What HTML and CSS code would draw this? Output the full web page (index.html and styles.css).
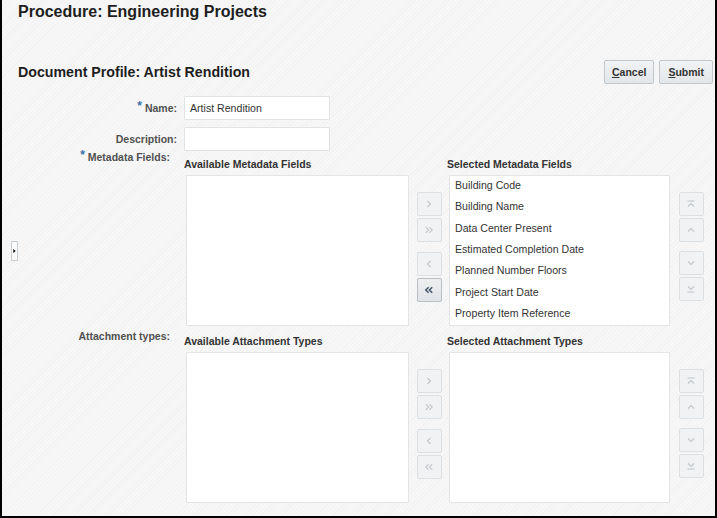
FILE: index.html
```html
<!DOCTYPE html>
<html lang="en">
<head>
<meta charset="utf-8">
<title>Document Profile</title>
<link rel="stylesheet" href="styles.css">
</head>
<body>
<div class="page">
  <h1 class="title">Procedure: Engineering Projects</h1>
  <div class="profile-head">
    <h2 class="subtitle">Document Profile: Artist Rendition</h2>
    <div class="actions">
      <button class="btn" type="button"><u>C</u>ancel</button>
      <button class="btn" type="button"><u>S</u>ubmit</button>
    </div>
  </div>

  <div class="form">
    <div class="lbl"><span class="req">*</span> Name:</div>
    <div class="field"><input class="text" type="text" value="Artist Rendition"></div>

    <div class="lbl">Description:</div>
    <div class="field"><input class="text" type="text" value=""></div>

    <div class="lbl lbl-top row-meta"><span class="req">*</span> Metadata Fields:</div>
    <div class="shuttle row-meta shuttle-meta">
      <div class="sh-head">Available Metadata Fields</div>
      <div></div>
      <div class="sh-head sh-head-r">Selected Metadata Fields</div>
      <div></div>
      <div class="list list-l"></div>
      <div class="moves">
        <div class="grp">
          <span class="mb"><svg viewBox="0 0 10 10"><polyline points="3.5,2 6.5,5 3.5,8"/></svg></span>
          <span class="mb"><svg viewBox="0 0 10 10"><polyline points="1.8,2.2 4.6,5 1.8,7.8"/><polyline points="5.4,2.2 8.2,5 5.4,7.8"/></svg></span>
        </div>
        <div class="grp">
          <span class="mb"><svg viewBox="0 0 10 10"><polyline points="6.5,2 3.5,5 6.5,8"/></svg></span>
          <span class="mb mb-on"><svg viewBox="0 0 10 10"><polyline points="4.6,2.2 1.8,5 4.6,7.8"/><polyline points="8.2,2.2 5.4,5 8.2,7.8"/></svg></span>
        </div>
      </div>
      <ul class="list list-r">
        <li>Building Code</li>
        <li>Building Name</li>
        <li>Data Center Present</li>
        <li>Estimated Completion Date</li>
        <li>Planned Number Floors</li>
        <li>Project Start Date</li>
        <li>Property Item Reference</li>
      </ul>
      <div class="moves moves-r">
        <div class="grp">
          <span class="mb"><svg viewBox="0 0 10 10"><line x1="1.5" y1="2" x2="8.5" y2="2"/><polyline points="2,7.5 5,4.5 8,7.5"/></svg></span>
          <span class="mb"><svg viewBox="0 0 10 10"><polyline points="2,6.5 5,3.5 8,6.5"/></svg></span>
        </div>
        <div class="grp">
          <span class="mb"><svg viewBox="0 0 10 10"><polyline points="2,3.5 5,6.5 8,3.5"/></svg></span>
          <span class="mb"><svg viewBox="0 0 10 10"><polyline points="2,2.5 5,5.5 8,2.5"/><line x1="1.5" y1="8" x2="8.5" y2="8"/></svg></span>
        </div>
      </div>
    </div>

    <div class="lbl lbl-top row-att">Attachment types:</div>
    <div class="shuttle row-att shuttle-att">
      <div class="sh-head">Available Attachment Types</div>
      <div></div>
      <div class="sh-head sh-head-r">Selected Attachment Types</div>
      <div></div>
      <div class="list list-l"></div>
      <div class="moves">
        <div class="grp">
          <span class="mb"><svg viewBox="0 0 10 10"><polyline points="3.5,2 6.5,5 3.5,8"/></svg></span>
          <span class="mb"><svg viewBox="0 0 10 10"><polyline points="1.8,2.2 4.6,5 1.8,7.8"/><polyline points="5.4,2.2 8.2,5 5.4,7.8"/></svg></span>
        </div>
        <div class="grp">
          <span class="mb"><svg viewBox="0 0 10 10"><polyline points="6.5,2 3.5,5 6.5,8"/></svg></span>
          <span class="mb"><svg viewBox="0 0 10 10"><polyline points="4.6,2.2 1.8,5 4.6,7.8"/><polyline points="8.2,2.2 5.4,5 8.2,7.8"/></svg></span>
        </div>
      </div>
      <ul class="list list-r"></ul>
      <div class="moves moves-r">
        <div class="grp">
          <span class="mb"><svg viewBox="0 0 10 10"><line x1="1.5" y1="2" x2="8.5" y2="2"/><polyline points="2,7.5 5,4.5 8,7.5"/></svg></span>
          <span class="mb"><svg viewBox="0 0 10 10"><polyline points="2,6.5 5,3.5 8,6.5"/></svg></span>
        </div>
        <div class="grp">
          <span class="mb"><svg viewBox="0 0 10 10"><polyline points="2,3.5 5,6.5 8,3.5"/></svg></span>
          <span class="mb"><svg viewBox="0 0 10 10"><polyline points="2,2.5 5,5.5 8,2.5"/><line x1="1.5" y1="8" x2="8.5" y2="8"/></svg></span>
        </div>
      </div>
    </div>
  </div>

  <div class="handle"><svg viewBox="0 0 6 20"><polygon points="1.5,7.5 4.5,10 1.5,12.5"/></svg></div>
</div>
</body>
</html>
```

FILE: styles.css
```css
html, body {
  margin: 0;
  padding: 0;
}

body {
  width: 717px;
  height: 518px;
  overflow: hidden;
  font-family: "Liberation Sans", Arial, sans-serif;
  color: #333;
}

.page {
  position: relative;
  box-sizing: border-box;
  width: 717px;
  height: 518px;
  border-left: 2px solid #000;
  border-right: 2px solid #000;
  border-bottom: 2px solid #000;
  background-color: #f5f5f5;
  background-image: repeating-linear-gradient(-45deg, #f2f2f2 0 1px, #f7f7f7 1px 3px);
}

.title {
  margin: 0;
  padding: 3px 0 0 16px;
  font-size: 16px;
  line-height: 18px;
  font-weight: bold;
  color: #1e1e1e;
}

.profile-head {
  display: flex;
  align-items: center;
  justify-content: space-between;
  margin-top: 39px;
  height: 24px;
  padding-left: 16px;
  padding-right: 2px;
}

.subtitle {
  margin: 0;
  font-size: 14.2px;
  line-height: 16px;
  font-weight: bold;
  color: #1e1e1e;
}

.actions {
  display: flex;
  gap: 5px;
}

.btn {
  box-sizing: border-box;
  height: 24px;
  padding: 0 7px;
  font-family: "Liberation Sans", Arial, sans-serif;
  font-size: 10.5px;
  font-weight: bold;
  color: #333;
  background: linear-gradient(#f1f3f5, #e3e6e9);
  border: 1px solid #c2c7cc;
  border-radius: 2px;
}

.btn:last-child {
  padding: 0 8px;
}

.btn u {
  text-decoration: underline;
}

.form {
  display: grid;
  grid-template-columns: 175px 1fr;
  column-gap: 7px;
  row-gap: 7px;
  align-items: center;
  margin-top: 12px;
}

.lbl {
  text-align: right;
  font-size: 10.5px;
  font-weight: bold;
  color: #505050;
  line-height: 14px;
  white-space: nowrap;
}

.req {
  position: relative;
  top: -2px;
  color: #3f6fa8;
  font-size: 12px;
}

.lbl-top {
  align-self: start;
  padding-right: 7px;
}

.row-meta {
  margin-top: -8px;
}

.row-att {
  margin-top: -4px;
}

.text {
  display: block;
  box-sizing: border-box;
  width: 146px;
  height: 24px;
  margin: 0;
  padding: 0 5px;
  font-family: "Liberation Sans", Arial, sans-serif;
  font-size: 10.6px;
  color: #333;
  background: #fff;
  border: 1px solid #e0e3e6;
  border-radius: 1px;
  outline: none;
}

.shuttle {
  display: grid;
  grid-template-columns: 225px 40px 221px 42px;
  grid-template-rows: auto 151px;
  row-gap: 4px;
  align-self: start;
}

.shuttle-meta {
  padding-top: 7px;
}

.shuttle-att {
  padding-top: 5px;
}

.sh-head {
  font-size: 10.5px;
  font-weight: bold;
  line-height: 14px;
  color: #333;
  white-space: nowrap;
}

.sh-head-r {
  margin-left: -2px;
}

.list {
  box-sizing: border-box;
  margin: 0;
  padding: 0;
  list-style: none;
  background: #fff;
  border: 1px solid #e2e5e8;
  border-radius: 1px;
}

.list-l {
  margin-left: 2px;
}

.list-r li {
  height: 21.33px;
  line-height: 21.33px;
  padding-left: 5px;
  font-size: 10.6px;
  color: #333;
  white-space: nowrap;
}

.list-r li:first-child {
  margin-top: -1px;
}

.moves {
  display: flex;
  flex-direction: column;
  align-items: center;
  gap: 10px;
  padding-top: 17px;
}

.moves-r {
  gap: 9px;
}

.grp {
  display: flex;
  flex-direction: column;
  gap: 2px;
}

.mb {
  box-sizing: border-box;
  display: flex;
  align-items: center;
  justify-content: center;
  width: 25px;
  height: 24px;
  background: #f1f2f3;
  border: 1px solid #dde0e3;
  border-radius: 2px;
}

.mb svg {
  width: 10px;
  height: 10px;
  fill: none;
  stroke: #c2c6ca;
  stroke-width: 1.1;
}

.mb-on {
  background: linear-gradient(#eceef0, #e1e4e7);
  border-color: #b8bec4;
}

.mb-on svg {
  stroke: #44556a;
  stroke-width: 1.5;
}

.handle {
  position: absolute;
  left: 9px;
  top: 241px;
  box-sizing: border-box;
  width: 7px;
  height: 20px;
  background: #fafafa;
  border: 1px solid #c9ced3;
}

.handle svg {
  display: block;
  width: 5px;
  height: 18px;
  fill: #111;
}
```
